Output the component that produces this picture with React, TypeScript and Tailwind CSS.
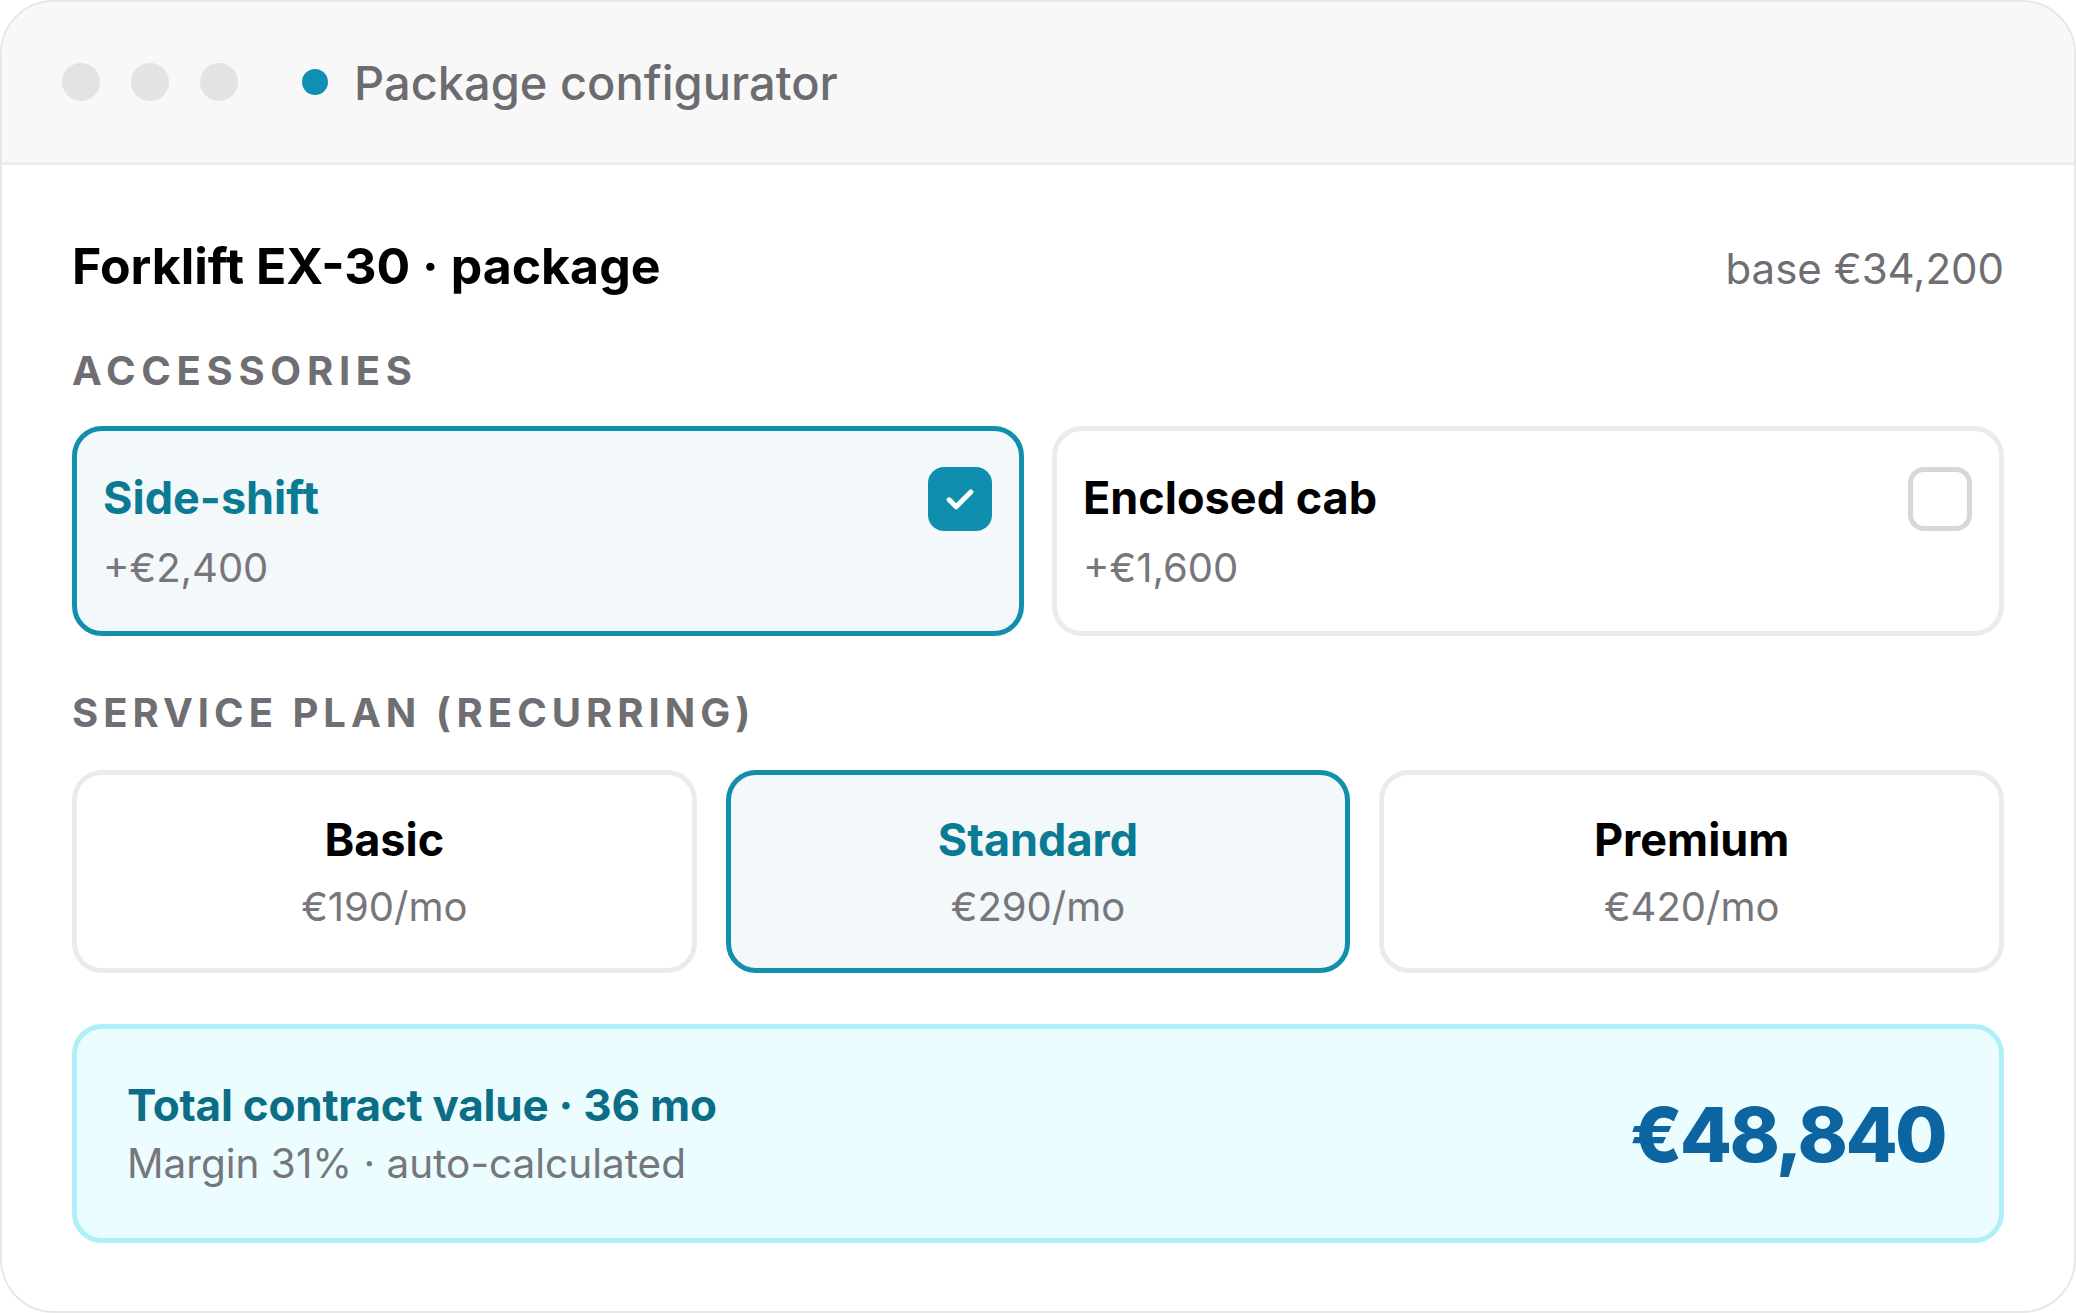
import React, { useState } from 'react';

type Accessory = { id: string; name: string; price: string };
type Plan = { id: string; name: string; price: string };

const accessories: Accessory[] = [
  { id: 'side-shift', name: 'Side-shift', price: '+€2,400' },
  { id: 'cab', name: 'Enclosed cab', price: '+€1,600' },
];

const plans: Plan[] = [
  { id: 'basic', name: 'Basic', price: '€190/mo' },
  { id: 'standard', name: 'Standard', price: '€290/mo' },
  { id: 'premium', name: 'Premium', price: '€420/mo' },
];

const CheckIcon: React.FC = () => (
  <svg viewBox="0 0 24 24" className="w-[40px] h-[40px]" fill="none" stroke="white" strokeWidth={3} strokeLinecap="round" strokeLinejoin="round">
    <path d="M5.5 12.5l4.2 4.2L18.5 7.8" />
  </svg>
);

const App: React.FC = () => {
  const [selected, setSelected] = useState<Record<string, boolean>>({ 'side-shift': true, cab: false });
  const [plan, setPlan] = useState('standard');

  return (
    <div className="w-[2076px] h-[1313px] bg-white font-['Inter','Liberation_Sans',sans-serif]">
      <div className="h-full flex flex-col rounded-[54px] border-2 border-[#e7e7e7] overflow-hidden bg-white">
        {/* title bar */}
        <div className="h-[163px] shrink-0 flex items-center pl-[60px] bg-[#f8f8f8] border-b-[3px] border-[#ececec]">
          <div className="flex items-center gap-[31px]">
            <span className="w-[38px] h-[38px] rounded-full bg-[#e3e3e5]" />
            <span className="w-[38px] h-[38px] rounded-full bg-[#e3e3e5]" />
            <span className="w-[38px] h-[38px] rounded-full bg-[#e3e3e5]" />
          </div>
          <span className="ml-[64px] w-[26px] h-[26px] rounded-full bg-[#0f8fb3]" />
          <span className="ml-[26px] text-[47px] leading-none font-medium text-[#6b6b70]">Package configurator</span>
        </div>

        <div className="flex flex-col px-[70px] pt-[76px]">
          <div className="flex items-baseline justify-between">
            <h1 className="text-[50px] leading-none font-bold text-[#000]">Forklift EX-30 · package</h1>
            <span className="text-[42px] leading-none text-[#6e6e73]">base €34,200</span>
          </div>

          <div className="mt-[60px] text-[40px] leading-none font-bold tracking-[0.143em] text-[#6e6e73]">ACCESSORIES</div>

          <div className="mt-[35px] grid grid-cols-2 gap-[28px]">
            {accessories.map((a) => {
              const on = selected[a.id];
              return (
                <button
                  key={a.id}
                  onClick={() => setSelected({ ...selected, [a.id]: !on })}
                  className={`h-[210px] rounded-[30px] border-[5px] pl-[26px] pr-[27px] pt-[36px] flex justify-between items-start text-left ${
                    on ? 'border-[#138fae] bg-[#f3f8fb]' : 'border-[#ebebeb] bg-white'
                  }`}
                >
                  <div className="mt-[8px] flex flex-col">
                    <span className={`text-[45px] leading-none font-bold ${on ? 'text-[#0b7a93]' : 'text-[#000]'}`}>{a.name}</span>
                    <span className="mt-[28px] text-[40px] leading-none text-[#76767b]">{a.price}</span>
                  </div>
                  {on ? (
                    <span className="w-[64px] h-[64px] rounded-[16px] bg-[#0e8fae] flex items-center justify-center">
                      <CheckIcon />
                    </span>
                  ) : (
                    <span className="w-[64px] h-[64px] rounded-[16px] border-[5px] border-[#d7d7da] bg-white" />
                  )}
                </button>
              );
            })}
          </div>

          <div className="mt-[57px] text-[40px] leading-none font-bold tracking-[0.125em] text-[#6e6e73]">SERVICE PLAN (RECURRING)</div>

          <div className="mt-[37px] grid grid-cols-3 gap-[29px]">
            {plans.map((p) => {
              const on = plan === p.id;
              return (
                <button
                  key={p.id}
                  onClick={() => setPlan(p.id)}
                  className={`h-[203px] rounded-[30px] border-[5px] flex flex-col items-center justify-center ${
                    on ? 'border-[#138fae] bg-[#f3f8fb]' : 'border-[#ebebeb] bg-white'
                  }`}
                >
                  <span className={`text-[45px] leading-none font-bold ${on ? 'text-[#0b7a93]' : 'text-[#000]'}`}>{p.name}</span>
                  <span className="mt-[25px] text-[40px] leading-none text-[#76767b]">{p.price}</span>
                </button>
              );
            })}
          </div>

          <div className="mt-[51px] h-[219px] rounded-[30px] border-[5px] border-[#aeeff8] bg-[#ebfdff] flex items-center justify-between pl-[50px] pr-[54px]">
            <div className="flex flex-col">
              <span className="text-[44px] leading-none font-bold text-[#0b6d86] tracking-[-0.005em]">Total contract value · 36 mo</span>
              <span className="mt-[17px] text-[40.5px] leading-none text-[#76767b]">Margin 31% · auto-calculated</span>
            </div>
            <span className="text-[76px] leading-none font-extrabold text-[#0c65a0] tracking-[-0.035em]">€48,840</span>
          </div>
        </div>
      </div>
    </div>
  );
};

export default App;
